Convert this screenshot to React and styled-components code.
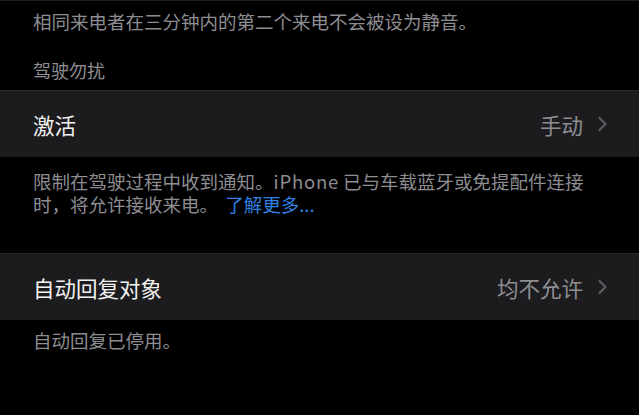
import React from 'react';
import styled, { createGlobalStyle } from 'styled-components';

const GlobalStyle = createGlobalStyle`
  html, body {
    margin: 0;
    padding: 0;
    background: #000;
  }
  body {
    font-family: "Noto Sans CJK SC", "Noto Sans", sans-serif;
    -webkit-font-smoothing: antialiased;
  }
`;

function Chevron() {
  return (
    <ChevronIcon width="11" height="16" viewBox="0 0 11 16">
      <path d="M2.5 2 L8.5 8 L2.5 14" fill="none" stroke="currentColor" strokeWidth="2.2" strokeLinecap="round" strokeLinejoin="round" />
    </ChevronIcon>
  );
}

function Cell({ label, value }) {
  return (
    <CellRow>
      <CellLabel>{label}</CellLabel>
      <CellRight>
        <CellValue>{value}</CellValue>
        <Chevron />
      </CellRight>
    </CellRow>
  );
}

export default function App() {
  return (
    <>
      <GlobalStyle />
      <Screen>
        <TopEdge />
        <Footer $top={9}>相同来电者在三分钟内的第二个来电不会被设为静音。</Footer>
        <Header>驾驶勿扰</Header>
        <Cell label="激活" value="手动" />
        <Footer $top={13}>
          限制在驾驶过程中收到通知。<Latin>iPhone</Latin>已与车载蓝牙或免提配件连接
          <br />
          时，将允许接收来电。 <Link>了解更多...</Link>
        </Footer>
        <Spacer />
        <Cell label="自动回复对象" value="均不允许" />
        <Footer $top={9}>自动回复已停用。</Footer>
      </Screen>
    </>
  );
}

const Screen = styled.div`
  width: 639px;
  height: 415px;
  overflow: hidden;
  background: #000;
  display: flex;
  flex-direction: column;
`;

const TopEdge = styled.div`
  height: 1px;
  background: #1e1e20;
`;

const Footer = styled.div`
  padding: ${(p) => p.$top}px 33px 0;
  font-size: 18.5px;
  line-height: 23px;
  color: #8d8d92;
  white-space: nowrap;
`;

const Latin = styled.span`
  letter-spacing: 0.8px;
  margin-right: 4px;
`;

const Header = styled.div`
  padding: 26px 33px 8px;
  font-size: 18px;
  line-height: 23px;
  color: #8d8d92;
`;

const CellRow = styled.div`
  height: 67px;
  box-sizing: border-box;
  background: #1c1c1e;
  border-top: 1px solid #2a2a2c;
  display: flex;
  align-items: center;
  justify-content: space-between;
  padding: 0 31px 0 33px;
`;

const CellLabel = styled.div`
  font-size: 21.5px;
  color: #f2f2f2;
`;

const CellRight = styled.div`
  display: flex;
  align-items: center;
  gap: 14px;
`;

const CellValue = styled.div`
  font-size: 21.5px;
  color: #8e8e93;
`;

const ChevronIcon = styled.svg`
  color: #5c5c60;
  display: block;
`;

const Link = styled.span`
  color: #2f80e0;
  margin-left: 3px;
`;

const Spacer = styled.div`
  height: 37px;
`;
